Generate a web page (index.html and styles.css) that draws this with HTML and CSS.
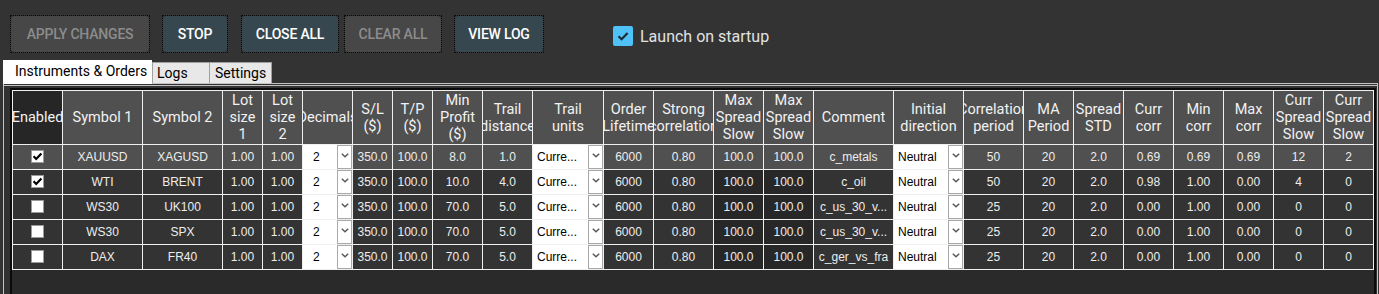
FILE: index.html
```html
<!DOCTYPE html>
<html>
<head>
<meta charset="utf-8">
<link rel="stylesheet" href="styles.css">
</head>
<body>
<div class="app">
  <div class="toolbar">
    <button class="btn btn-off w-apply">APPLY CHANGES</button>
    <button class="btn btn-on w-stop">STOP</button>
    <button class="btn btn-on w-close">CLOSE ALL</button>
    <button class="btn btn-off w-clear">CLEAR ALL</button>
    <button class="btn btn-on w-log">VIEW LOG</button>
    <label class="launch">
      <span class="launch-box"><svg width="20" height="20" viewBox="0 0 20 20"><path d="M5.5 10.2 L8.6 13.2 L14.6 7" fill="none" stroke="#1e2a30" stroke-width="2.2"/></svg></span>
      <span class="launch-text">Launch on startup</span>
    </label>
  </div>

  <div class="tabs">
    <div class="tab tab-active">Instruments &amp; Orders</div>
    <div class="tab tab-logs">Logs</div>
    <div class="tab tab-settings">Settings</div>
  </div>

  <div class="panel">
    <div class="gridwrap">
      <div class="grid" id="grid">
        <div class="hc hc-dark"><span>Enabled</span></div>
        <div class="hc"><span>Symbol 1</span></div>
        <div class="hc"><span>Symbol 2</span></div>
        <div class="hc"><span>Lot<br>size<br>1</span></div>
        <div class="hc"><span>Lot<br>size<br>2</span></div>
        <div class="hc"><span>Decimals</span></div>
        <div class="hc"><span>S/L<br>($)</span></div>
        <div class="hc"><span>T/P<br>($)</span></div>
        <div class="hc"><span>Min<br>Profit<br>($)</span></div>
        <div class="hc"><span>Trail<br>distance</span></div>
        <div class="hc"><span>Trail<br>units</span></div>
        <div class="hc"><span>Order<br>Lifetime</span></div>
        <div class="hc"><span>Strong<br>correlation</span></div>
        <div class="hc"><span>Max<br>Spread<br>Slow</span></div>
        <div class="hc"><span>Max<br>Spread<br>Slow</span></div>
        <div class="hc"><span>Comment</span></div>
        <div class="hc"><span>Initial<br>direction</span></div>
        <div class="hc"><span>Correlation<br>period</span></div>
        <div class="hc"><span>MA<br>Period</span></div>
        <div class="hc"><span>Spread<br>STD</span></div>
        <div class="hc"><span>Curr<br>corr</span></div>
        <div class="hc"><span>Min<br>corr</span></div>
        <div class="hc"><span>Max<br>corr</span></div>
        <div class="hc"><span>Curr<br>Spread<br>Slow</span></div>
        <div class="hc"><span>Curr<br>Spread<br>Slow</span></div>
      </div>
    </div>
  </div>
</div>
<script src="app.js"></script>
</body>
</html>
```

FILE: app.js
```js
(function () {
  var rows = [
    [true, "XAUUSD", "XAGUSD", "1.00", "1.00", "2", "350.0", "100.0", "8.0", "1.0", "Curre...", "6000", "0.80", "100.0", "100.0", "c_metals", "Neutral", "50", "20", "2.0", "0.69", "0.69", "0.69", "12", "2"],
    [true, "WTI", "BRENT", "1.00", "1.00", "2", "350.0", "100.0", "10.0", "4.0", "Curre...", "6000", "0.80", "100.0", "100.0", "c_oil", "Neutral", "50", "20", "2.0", "0.98", "1.00", "0.00", "4", "0"],
    [false, "WS30", "UK100", "1.00", "1.00", "2", "350.0", "100.0", "70.0", "5.0", "Curre...", "6000", "0.80", "100.0", "100.0", "c_us_30_v...", "Neutral", "25", "20", "2.0", "0.00", "1.00", "0.00", "0", "0"],
    [false, "WS30", "SPX", "1.00", "1.00", "2", "350.0", "100.0", "70.0", "5.0", "Curre...", "6000", "0.80", "100.0", "100.0", "c_us_30_v...", "Neutral", "25", "20", "2.0", "0.00", "1.00", "0.00", "0", "0"],
    [false, "DAX", "FR40", "1.00", "1.00", "2", "350.0", "100.0", "70.0", "5.0", "Curre...", "6000", "0.80", "100.0", "100.0", "c_ger_vs_fra", "Neutral", "25", "20", "2.0", "0.00", "1.00", "0.00", "0", "0"]
  ];
  var combos = { 5: 1, 10: 1, 16: 1 };
  var darkCols = { 13: 1, 14: 1 };
  var grid = document.getElementById("grid");
  var chevron = '<svg width="8" height="5" viewBox="0 0 8 5"><path d="M0.8 0.8 L4 3.8 L7.2 0.8" fill="none" stroke="#5a5a5a" stroke-width="1.5"/></svg>';
  var check = '<svg width="13" height="13" viewBox="0 0 13 13"><path d="M2.6 6.3 L5.2 9 L10.4 3.4" fill="none" stroke="#000" stroke-width="2.2"/></svg>';
  rows.forEach(function (r, ri) {
    r.forEach(function (v, ci) {
      var c = document.createElement("div");
      c.className = "dc" + (ri === 0 ? " dc-sel" : "") + (darkCols[ci] && ri > 0 ? " dc-dark" : "");
      if (ci === 0) {
        c.innerHTML = '<span class="chk">' + (v ? check : "") + "</span>";
      } else if (combos[ci]) {
        c.className += " dc-combo";
        c.innerHTML = '<div class="combo"><span class="combo-text">' + v + '</span><span class="combo-btn">' + chevron + "</span></div>";
      } else {
        c.textContent = v;
      }
      grid.appendChild(c);
    });
  });
})();
```

FILE: styles.css
```css
html, body {
  margin: 0;
  padding: 0;
}
body {
  width: 1379px;
  height: 294px;
  overflow: hidden;
  background: #333333;
}
.app {
  width: 1379px;
  height: 294px;
  overflow: hidden;
}
.toolbar {
  display: flex;
  align-items: center;
  padding: 16px 0 0 11px;
  height: 36px;
}
.btn {
  position: relative;
  height: 36px;
  border: none;
  border-radius: 4px;
  padding: 0;
  font-family: Roboto, "Liberation Sans", sans-serif;
  font-weight: 500;
  font-size: 14px;
  letter-spacing: -0.2px;
  text-align: center;
}
.btn::after {
  content: "";
  position: absolute;
  left: -1px;
  right: -1px;
  top: -1px;
  bottom: -1px;
  border: 1px dotted #0a0a0a;
}
.btn-off {
  background: #474747;
  color: #8c8c8c;
}
.btn-on {
  background: #37474f;
  color: #ffffff;
}
.w-apply { width: 138px; }
.w-stop { width: 64px; margin-left: 14px; }
.w-close { width: 96px; margin-left: 15px; }
.w-clear { width: 96px; margin-left: 7px; }
.w-log { width: 88px; margin-left: 14px; }
.launch {
  display: flex;
  align-items: center;
  margin-left: 70px;
  margin-top: 4px;
}
.launch-box {
  width: 20px;
  height: 20px;
  border-radius: 2px;
  background: #4fc3f7;
  display: flex;
}
.launch-text {
  margin-left: 7px;
  font-family: Roboto, "Liberation Sans", sans-serif;
  font-size: 16px;
  color: #e2e2e2;
}
.tabs {
  display: flex;
  align-items: flex-end;
  height: 23px;
  margin-top: 8px;
  margin-left: 3px;
}
.tab {
  box-sizing: border-box;
  font-family: Roboto, "Liberation Sans", sans-serif;
  font-size: 14px;
  color: #000;
  white-space: nowrap;
}
.tab-active {
  position: relative;
  z-index: 1;
  width: 149px;
  height: 24px;
  margin-bottom: -1px;
  background: #ffffff;
  padding: 1px 0 0 12px;
  line-height: 20px;
}
.tab-logs {
  width: 58px;
  height: 21px;
  background: #e8e8e8;
  border: 1px solid #a0a0a0;
  border-bottom: none;
  padding-left: 4px;
  line-height: 20px;
}
.tab-settings {
  width: 62px;
  height: 21px;
  background: #e8e8e8;
  border: 1px solid #a0a0a0;
  border-bottom: none;
  border-left: none;
  padding-left: 5px;
  line-height: 20px;
}
.panel {
  margin-left: 3px;
  width: 1375px;
  height: 211px;
  overflow: hidden;
  box-sizing: border-box;
  border-top: 3px double #c4c4c4;
  border-left: 1px solid #c4c4c4;
  border-right: 1px solid #c4c4c4;
  background: #323232;
  padding: 2px 0 0 6px;
}
.gridwrap {
  width: max-content;
  height: 220px;
  border: 2px solid #0b0b0b;
  background: #2a2a2a;
}
.grid {
  display: grid;
  grid-template-columns: 49px 79px 79px 39px 39px 49px 39px 39px 49px 49px 70px 49px 59px 49px 49px 79px 69px 59px 49px 49px 49px 49px 49px 49px 49px;
  grid-template-rows: 53px repeat(5, 24px);
  gap: 1px;
  background: #efefef;
  border: 1px solid #efefef;
  width: max-content;
}
.hc {
  background: #505050;
  color: #f2f2f2;
  font-family: Roboto, "Liberation Sans", sans-serif;
  font-size: 14.5px;
  line-height: 17px;
  display: flex;
  align-items: center;
  justify-content: center;
  overflow: hidden;
  white-space: nowrap;
  text-align: center;
}
.hc span {
  display: block;
  flex: none;
}
.hc-dark {
  background: #262626;
}
.dc {
  background: #333333;
  color: #ededed;
  font-family: "Liberation Sans", Arial, sans-serif;
  font-size: 12px;
  display: flex;
  align-items: center;
  justify-content: center;
  overflow: hidden;
  white-space: nowrap;
}
.dc-sel {
  background: #505050;
}
.dc-dark {
  background: #272727;
}
.dc-combo {
  align-items: stretch;
  justify-content: stretch;
}
.combo {
  flex: 1;
  display: flex;
  background: #ffffff;
}
.combo-text {
  flex: 1;
  color: #000;
  font-family: "Liberation Sans", Arial, sans-serif;
  font-size: 12px;
  padding-left: 4px;
  display: flex;
  align-items: center;
  overflow: hidden;
}
.dc-combo:nth-child(25n + 6) .combo-text {
  padding-left: 10px;
}
.combo-btn {
  width: 15px;
  box-sizing: border-box;
  border: 1px solid #a8a8a8;
  background: #ffffff;
  display: flex;
  justify-content: center;
  padding-top: 7px;
}
.chk {
  width: 13px;
  height: 13px;
  box-sizing: border-box;
  background: #ffffff;
  border: 1px solid #9a9a9a;
  display: flex;
  align-items: center;
  justify-content: center;
  margin-top: -1px;
}
.chk svg {
  flex: none;
}
```
